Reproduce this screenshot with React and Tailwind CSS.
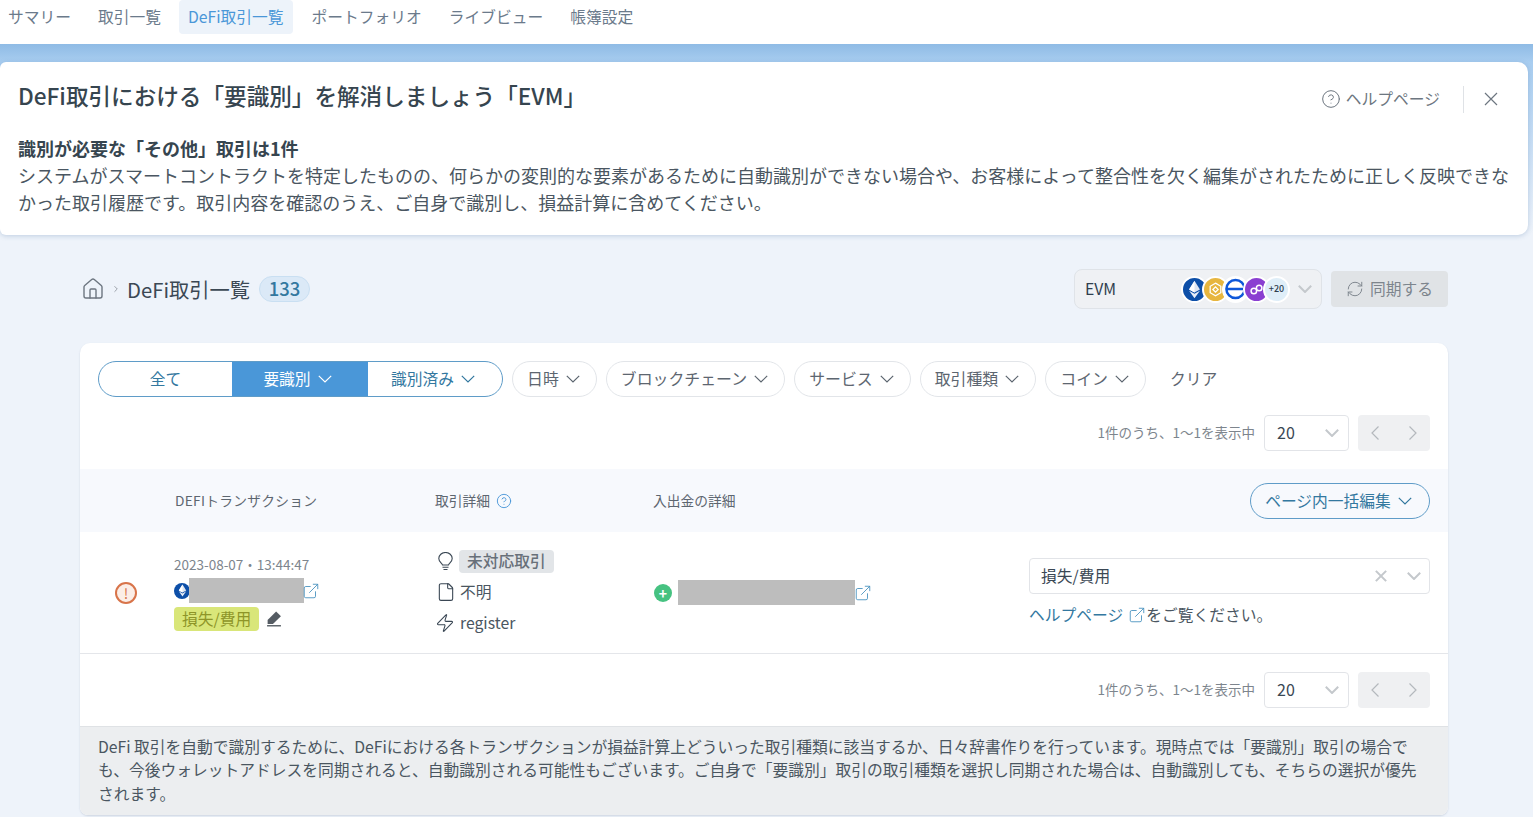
import React from "react";
import { ChevronRight, RefreshCw, Home, CircleHelp, ExternalLink, File, Zap } from "lucide-react";

function Chev({ className = "", bold = false }) {
  return (
    <svg className={`shrink-0 ${className}`} width="14" height="8" viewBox="0 0 14 8" fill="none" stroke="currentColor" strokeWidth={bold ? 2 : 1.2}>
      <path d="M0.8 0.8 L7 7 L13.2 0.8" />
    </svg>
  );
}

function Cross({ size = 14, weight = 1.2, className = "" }) {
  return (
    <svg className={className} width={size} height={size} viewBox="0 0 14 14" fill="none" stroke="currentColor" strokeWidth={weight}>
      <path d="M1 1 L13 13 M13 1 L1 13" />
    </svg>
  );
}

function Chip({ label }) {
  return (
    <div className="h-[36px] flex items-center gap-[7px] pl-[14px] pr-[16px] rounded-full border border-[#e2e5e9] text-[15.9px] text-[#5d6670] whitespace-nowrap">
      {label}
      <Chev />
    </div>
  );
}

function Pager() {
  return (
    <div className="flex items-center justify-end h-[36px] pr-[18px]">
      <span className="text-[13.5px] pb-[2px] text-[#7d858d] mr-[9px]">1件のうち、1〜1を表示中</span>
      <div className="w-[85px] h-[36px] border border-[#e2e4e8] rounded-[4px] flex items-center justify-between pl-[12px] pr-[9px] text-[16px] text-[#3a4754]">
        <span className="pb-[2px]">20</span>
        <Chev bold className="text-[#c4c8cc]" />
      </div>
      <div className="ml-[9px] w-[72px] h-[36px] rounded-[4px] bg-[#eff0f2] flex items-center justify-between px-[13px] text-[#b4b8bd]">
        <svg width="8" height="14" viewBox="0 0 8 14" fill="none" stroke="currentColor" strokeWidth="1.2"><path d="M7.5 0.5 L1 7 L7.5 13.5" /></svg>
        <svg width="8" height="14" viewBox="0 0 8 14" fill="none" stroke="currentColor" strokeWidth="1.2"><path d="M0.5 0.5 L7 7 L0.5 13.5" /></svg>
      </div>
    </div>
  );
}

function Coin({ bg, z, children }) {
  return (
    <span className="w-[27px] h-[27px] -ml-[6.5px] first:ml-0 rounded-full border-2 border-white flex items-center justify-center shrink-0 overflow-hidden" style={{ background: bg, zIndex: z }}>
      {children}
    </span>
  );
}

function EthGlyph({ size = 14 }) {
  return (
    <svg width={size} height={size} viewBox="0 0 14 14">
      <path d="M7 0.5 L11 7 L7 9.2 L3 7 Z" fill="#dfe6f2" />
      <path d="M7 0.5 L7 9.2 L3 7 Z" fill="#fff" />
      <path d="M3 7.9 L7 10.2 L11 7.9 L7 13.5 Z" fill="#e9eef7" />
    </svg>
  );
}

export default function App() {
  return (
    <div className="w-[1533px] h-[817px] overflow-hidden bg-[#eef3fa] text-[#2f3e4e] font-['Noto_Sans_CJK_JP','Noto_Sans',sans-serif]">
      <nav className="h-[44px] bg-white flex items-start text-[15.75px] text-[#6b7a8b]">
        <span className="h-[34px] pl-[8px] pr-[9px] flex items-center">サマリー</span>
        <span className="h-[34px] ml-[9px] px-[9px] flex items-center">取引一覧</span>
        <span className="h-[34px] ml-[9px] px-[9px] flex items-center rounded-[4px] bg-[#edf3fa] text-[#4a97d8]">DeFi取引一覧</span>
        <span className="h-[34px] ml-[10px] px-[9px] flex items-center">ポートフォリオ</span>
        <span className="h-[34px] ml-[9px] px-[9px] flex items-center">ライブビュー</span>
        <span className="h-[34px] ml-[9px] px-[9px] flex items-center">帳簿設定</span>
      </nav>

      <div className="bg-[linear-gradient(#8fbbe5,#a8cdf0_18px,#eef3fa_190px)] pt-[18px] pr-[5px] pb-[34px]">
        <section className="h-[173px] bg-white rounded-r-[10px] rounded-l-[6px] shadow-[0_1px_5px_rgba(80,120,170,0.3)] pl-[18px] pr-[19px] pt-[16px]">
          <div className="flex items-start justify-between h-[44px]">
            <h1 className="text-[22.6px] leading-[36px] font-medium text-[#36454f] whitespace-nowrap">DeFi取引における「要識別」を解消しましょう「EVM」</h1>
            <div className="flex items-center h-[40px] mt-[1px] text-[#6d7680]">
              <CircleHelp className="w-[20px] h-[20px]" strokeWidth={1.2} />
              <span className="ml-[5px] text-[15.75px]">ヘルプページ</span>
              <span className="w-px h-[27px] bg-[#dfe2e6] ml-[23px] mr-[20px]" />
              <Cross className="mr-[11px]" />
            </div>
          </div>
          <p className="mt-[13px] text-[18px] leading-[27px] font-bold text-[#36454f]">識別が必要な「その他」取引は1件</p>
          <p className="text-[18px] leading-[27px] text-[#4a5661] whitespace-nowrap">システムがスマートコントラクトを特定したものの、何らかの変則的な要素があるために自動識別ができない場合や、お客様によって整合性を欠く編集がされたために正しく反映できな<br />かった取引履歴です。取引内容を確認のうえ、ご自身で識別し、損益計算に含めてください。</p>
        </section>
      </div>

      <main className="ml-[80px] w-[1368px]">
        <div className="h-[40px] flex items-center">
          <Home className="w-[24px] h-[24px] ml-[1px] text-[#6d7680]" strokeWidth={1.4} />
          <ChevronRight className="w-[10px] h-[10px] ml-[6px] text-[#8b929a]" />
          <span className="ml-[6px] text-[20.3px] text-[#3b4854]">DeFi取引一覧</span>
          <span className="ml-[9px] h-[26px] w-[51px] rounded-full bg-[#dbe9f7] border border-[#c9dff2] flex items-center justify-center text-[18.5px] font-medium text-[#33789f]">133</span>
          <div className="ml-auto w-[248px] h-[40px] rounded-[8px] border border-[#dfe3e8] bg-[#eff1f4] flex items-center pl-[10px] text-[15.75px] text-[#2f3e4e]">
            <span className="w-[31px]">EVM</span>
            <div className="ml-[65px] flex items-center">
              <Coin bg="#0d4fa8" z={1}><EthGlyph size={19} /></Coin>
              <Coin bg="#e7b63f" z={2}>
                <svg width="17" height="17" viewBox="0 0 16 16" fill="none" stroke="#fff" strokeWidth="1.2"><path d="M8 2 L13 5 V11 L8 14 L3 11 V5 Z M8 5.5 L10.5 8 L8 10.5 L5.5 8 Z" /></svg>
              </Coin>
              <Coin bg="#fff" z={3}>
                <svg width="24" height="24" viewBox="0 0 24 24" fill="none" stroke="#0e57d9" strokeWidth="2.6"><circle cx="12" cy="12" r="9.5" /><path d="M3 12 H20" /></svg>
              </Coin>
              <Coin bg="#8a3fd1" z={4}>
                <svg width="17" height="17" viewBox="0 0 16 16" fill="none" stroke="#fff" strokeWidth="1.4"><circle cx="5.5" cy="9.5" r="2.6" /><circle cx="10.5" cy="6.5" r="2.6" /></svg>
              </Coin>
              <Coin bg="#dfeef8" z={5}><span className="text-[9px] text-[#2f3e4e] font-medium">+20</span></Coin>
            </div>
            <Chev bold className="ml-[8px] text-[#c4c8cc]" />
          </div>
          <div className="ml-[9px] w-[117px] h-[36px] rounded-[4px] bg-[#e0e3e6] flex items-center justify-center gap-[6px] text-[15.75px] text-[#7d858d]">
            <RefreshCw className="w-[18px] h-[18px]" strokeWidth={1.3} />
            同期する
          </div>
        </div>

        <div className="mt-[34px] bg-white rounded-t-[10px] rounded-b-[8px] overflow-hidden shadow-[0_1px_2px_rgba(80,100,130,0.2)]">
          <div className="h-[72px] pt-[18px] pl-[18px] flex items-start">
            <div className="w-[405px] h-[36px] flex rounded-full border border-[#5f9cc8] overflow-hidden text-[15.75px] text-[#33789f]">
              <span className="w-[133px] flex items-center justify-center">全て</span>
              <span className="w-[136px] pr-[5px] bg-[#4a97d8] text-white flex items-center justify-center gap-[7px]">要識別<Chev /></span>
              <span className="flex-1 pr-[4px] flex items-center justify-center gap-[7px]">識別済み<Chev /></span>
            </div>
            <div className="flex items-center gap-[9px] ml-[9px]">
              <Chip label="日時" />
              <Chip label="ブロックチェーン" />
              <Chip label="サービス" />
              <Chip label="取引種類" />
              <Chip label="コイン" />
              <span className="ml-[15px] text-[15.75px] text-[#5d6670]">クリア</span>
            </div>
          </div>

          <Pager />

          <div className="mt-[18px] h-[63px] bg-[#f7f9fd] flex items-center text-[13.75px] text-[#5d6670] pr-[18px]">
            <span className="ml-[95px] w-[260px] tracking-[0.25px]">DEFIトランザクション</span>
            <span className="w-[218px] flex items-center gap-[6px]">取引詳細<CircleHelp className="w-[16px] h-[16px] text-[#4a97d8]" strokeWidth={1.4} /></span>
            <span>入出金の詳細</span>
            <div className="ml-auto h-[36px] w-[180px] pr-[3px] rounded-full border border-[#5f9cc8] flex items-center justify-center gap-[7px] text-[15.75px] text-[#33789f]">ページ内一括編集<Chev /></div>
          </div>

          <div className="h-[122px] border-b border-[#e4e6ea] flex items-center pr-[18px]">
            <span className="ml-[35px] w-[22px] h-[22px] rounded-full border-2 border-[#d8744a] bg-[#fbeee7] text-[#d8744a] flex items-center justify-center text-[14px] leading-none">!</span>
            <div className="ml-[37px] w-[261px]">
              <div className="text-[13.5px] leading-[20px] text-[#7d858d]">2023-08-07・13:44:47</div>
              <div className="flex items-center h-[25px] mt-[4px]">
                <span className="w-[16px] h-[16px] rounded-full bg-[#0d4fa8] flex items-center justify-center"><EthGlyph size={13} /></span>
                <span className="w-[115px] h-[25px] -ml-[1px] bg-[#bdbdbd]" />
                <ExternalLink className="w-[18px] h-[18px] text-[#4b93c0] -ml-[2px]" strokeWidth={1.2} />
              </div>
              <div className="flex items-center mt-[4px]">
                <span className="h-[24px] px-[8px] rounded-[4px] bg-[#d9e679] text-[#8e9528] text-[15.75px] flex items-center">損失/費用</span>
                <svg className="ml-[7px]" width="16" height="16" viewBox="0 0 15 15" fill="#555c63"><path d="M9.5 0.5 L14 5 L6.5 12.2 H1.5 V8.4 Z" /><rect x="1" y="13.2" width="13" height="1.3" /></svg>
              </div>
            </div>
            <div className="w-[218px] text-[15.75px] text-[#4a5661]">
              <div className="flex items-center h-[31px] -mt-[1px]">
                <svg className="ml-[3px] text-[#3a4754]" width="15" height="19" viewBox="0 0 15 19" fill="none" stroke="currentColor" strokeWidth="1.1"><path d="M4.5 13 C3.8 11 0.8 9.8 0.8 6.5 A6.7 6 0 0 1 14.2 6.5 C14.2 9.8 11.2 11 10.5 13 Z" /><path d="M4.5 15.2 H10.5 M5.5 17.5 H9.5" /></svg>
                <span className="ml-[6px] h-[23px] px-[8px] rounded-[4px] bg-[#e2e5e8] text-[#687079] font-medium flex items-center">未対応取引</span>
              </div>
              <div className="flex items-center h-[31px]"><File className="w-[20px] h-[20px] text-[#3a4754] ml-[1px]" strokeWidth={1.3} /><span className="ml-[4px]">不明</span></div>
              <div className="flex items-center h-[31px]"><Zap className="w-[20px] h-[20px] text-[#3a4754]" strokeWidth={1.3} /><span className="ml-[5px]">register</span></div>
            </div>
            <div className="w-[376px] flex items-center">
              <span className="w-[18px] h-[18px] ml-[1px] rounded-full bg-[#46c281] text-white flex items-center justify-center text-[14px] leading-none font-bold">+</span>
              <span className="ml-[6px] w-[177px] h-[25px] bg-[#bdbdbd]" />
              <ExternalLink className="w-[18px] h-[18px] text-[#4b93c0] -ml-[1px]" strokeWidth={1.2} />
            </div>
            <div className="w-[401px]">
              <div className="h-[36px] border border-[#e2e4e8] rounded-[4px] flex items-center pl-[11px] pr-[8px] text-[15.75px] text-[#3a4754]">
                損失/費用
                <Cross size={12} weight={2.4} className="ml-auto text-[#c4c8cc]" />
                <Chev bold className="ml-[20px] text-[#c4c8cc]" />
              </div>
              <div className="mt-[9px] text-[15.75px] leading-[24px] text-[#4a5661] flex items-center">
                <span className="text-[#33789f]">ヘルプページ</span>
                <ExternalLink className="w-[18px] h-[18px] text-[#4b93c0] ml-[5px]" strokeWidth={1.2} />
                をご覧ください。
              </div>
            </div>
          </div>

          <div className="pt-[18px] pb-[18px]"><Pager /></div>

          <div className="h-[89px] bg-[#eceef0] border-t border-[#dfe2e5] pl-[18px] pr-[18px] pt-[8px] text-[15.75px] leading-[23.4px] text-[#4a5661]">
            DeFi 取引を自動で識別するために、DeFiにおける各トランザクションが損益計算上どういった取引種類に該当するか、日々辞書作りを行っています。現時点では「要識別」取引の場合でも、今後ウォレットアドレスを同期されると、自動識別される可能性もございます。ご自身で「要識別」取引の取引種類を選択し同期された場合は、自動識別しても、そちらの選択が優先されます。
          </div>
        </div>
      </main>
    </div>
  );
}
